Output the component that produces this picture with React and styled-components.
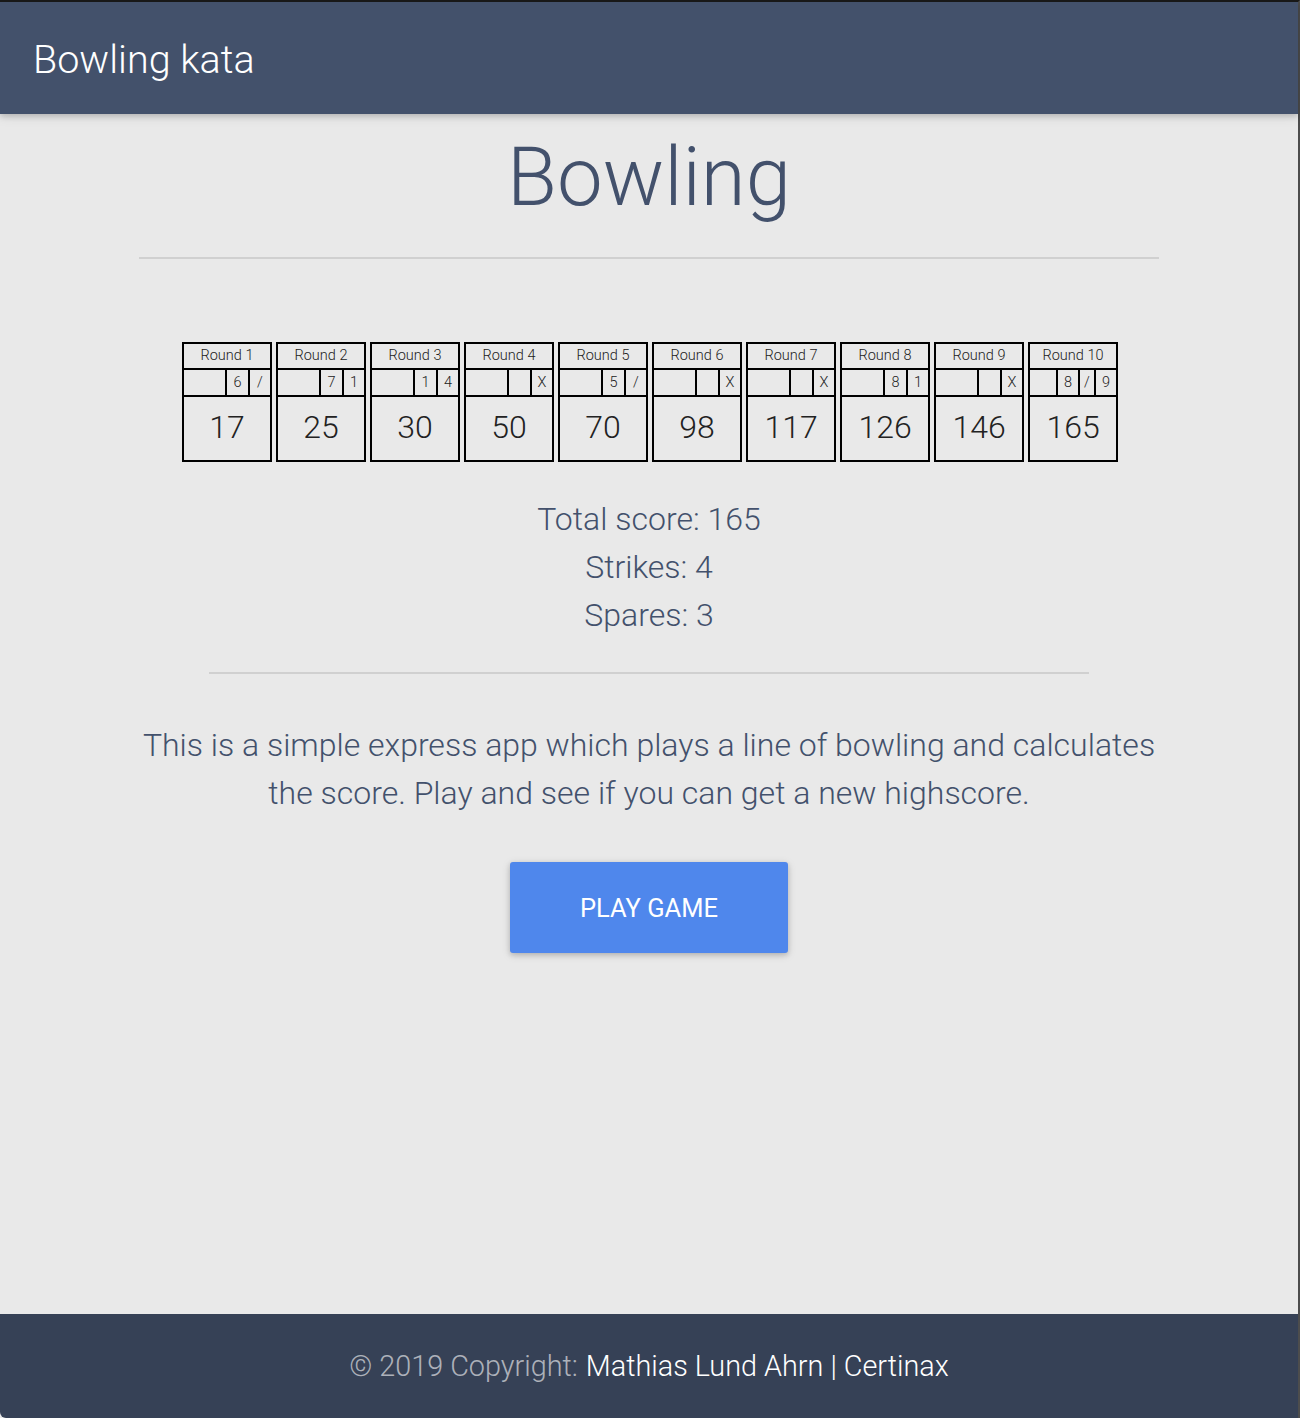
import React from "react"
import styled, { createGlobalStyle } from "styled-components"

const GlobalStyle = createGlobalStyle`
  html, body {
    margin: 0;
    padding: 0;
    background: #1c1c1c;
  }
  * { box-sizing: border-box; }
`

const Page = styled.div`
  display: flex;
  flex-direction: column;
  min-height: 1418px;
  border-top: 2px solid #1a1a1a;
  border-right: 2px solid #4d4d4d;
  background: #e9e9e9;
  font-family: Roboto, "Liberation Sans", sans-serif;
  color: #43516c;
`

const Navbar = styled.nav`
  display: flex;
  align-items: center;
  height: 112px;
  padding: 0 33px;
  background: #43516b;
  box-shadow: 0 2px 6px rgba(0, 0, 0, 0.18), 0 2px 12px rgba(0, 0, 0, 0.1);
  position: relative;
  z-index: 1;
`

const Brand = styled.span`
  color: #fff;
  font-size: 39.5px;
  font-weight: 300;
  padding-top: 2px;
`

const Main = styled.main`
  flex: 1;
  display: flex;
  flex-direction: column;
  align-items: center;
  padding-top: 13px;
`

const Title = styled.h1`
  margin: 0;
  font-size: 81.5px;
  font-weight: 300;
  line-height: 101px;
  color: #43516c;
`

const Rule = styled.hr`
  width: ${(p) => p.$width}px;
  margin: ${(p) => p.$margin};
  border: 0;
  border-top: 2px solid #d0d0d0;
`

const Sheet = styled.div`
  display: flex;
  gap: 4px;
  margin-left: 2px;
`

const Frame = styled.div`
  width: 90px;
  height: 120px;
  border: 2px solid #000;
  display: grid;
  grid-template-rows: 24px 2px 25px 2px 1fr;
  color: #222;
`

const FrameTitle = styled.div`
  font-size: 14.5px;
  font-weight: 300;
  text-align: center;
  line-height: 24px;
`

const Line = styled.div`
  background: #000;
`

const Rolls = styled.div`
  display: grid;
  grid-template-columns: ${(p) => p.$cols};
`

const Roll = styled.div`
  font-size: 14.5px;
  font-weight: 300;
  line-height: 25px;
  text-align: center;
  border-left: ${(p) => (p.$first ? "none" : "2px solid #000")};
`

const FrameScore = styled.div`
  display: flex;
  align-items: center;
  justify-content: center;
  font-size: 32px;
  font-weight: 300;
  padding-bottom: 4px;
`

const Stats = styled.div`
  margin-top: 33px;
  text-align: center;
  font-size: 32px;
  font-weight: 300;
  line-height: 48px;
`

const Intro = styled.p`
  margin: 0;
  width: 1030px;
  text-align: center;
  font-size: 32px;
  font-weight: 300;
  line-height: 48px;
`

const PlayButton = styled.button`
  margin-top: 45px;
  width: 278px;
  height: 91px;
  border: 0;
  border-radius: 3px;
  background: #4f87ec;
  color: #fff;
  font-family: Roboto, "Liberation Sans", sans-serif;
  font-size: 25.5px;
  font-weight: 400;
  text-transform: uppercase;
  box-shadow: 0 2px 5px rgba(0, 0, 0, 0.16), 0 2px 10px rgba(0, 0, 0, 0.12);
  cursor: pointer;
`

const Footer = styled.footer`
  height: 104px;
  display: flex;
  align-items: center;
  justify-content: center;
  background: #364156;
  border-bottom-left-radius: 6px;
  font-size: 28.8px;
  font-weight: 300;
  color: rgba(255, 255, 255, 0.6);
`

const FooterLink = styled.span`
  color: #fff;
  margin-left: 8px;
`

const frames = [
  { rolls: ["", "6", "/"], score: 17 },
  { rolls: ["", "7", "1"], score: 25 },
  { rolls: ["", "1", "4"], score: 30 },
  { rolls: ["", "", "X"], score: 50 },
  { rolls: ["", "5", "/"], score: 70 },
  { rolls: ["", "", "X"], score: 98 },
  { rolls: ["", "", "X"], score: 117 },
  { rolls: ["", "8", "1"], score: 126 },
  { rolls: ["", "", "X"], score: 146 },
  { rolls: ["", "8", "/", "9"], score: 165 },
]

export default function App() {
  return (
    <>
      <GlobalStyle />
      <Page>
        <Navbar>
          <Brand>Bowling kata</Brand>
        </Navbar>
        <Main>
          <Title>Bowling</Title>
          <Rule $width={1020} $margin="29px 0 83px" />
          <Sheet>
            {frames.map((f, i) => (
              <Frame key={i}>
                <FrameTitle>Round {i + 1}</FrameTitle>
                <Line />
                <Rolls $cols={f.rolls.length === 4 ? "1fr 22px 16px 22px" : "1fr 23px 22px"}>
                  {f.rolls.map((r, j) => (
                    <Roll key={j} $first={j === 0}>{r}</Roll>
                  ))}
                </Rolls>
                <Line />
                <FrameScore>{f.score}</FrameScore>
              </Frame>
            ))}
          </Sheet>
          <Stats>
            <div>Total score: 165</div>
            <div>Strikes: 4</div>
            <div>Spares: 3</div>
          </Stats>
          <Rule $width={880} $margin="33px 0 47px" />
          <Intro>
            This is a simple express app which plays a line of bowling and calculates the score. Play and see if you can get a new highscore.
          </Intro>
          <PlayButton>Play game</PlayButton>
        </Main>
        <Footer>
          © 2019 Copyright:<FooterLink>Mathias Lund Ahrn | Certinax</FooterLink>
        </Footer>
      </Page>
    </>
  )
}
